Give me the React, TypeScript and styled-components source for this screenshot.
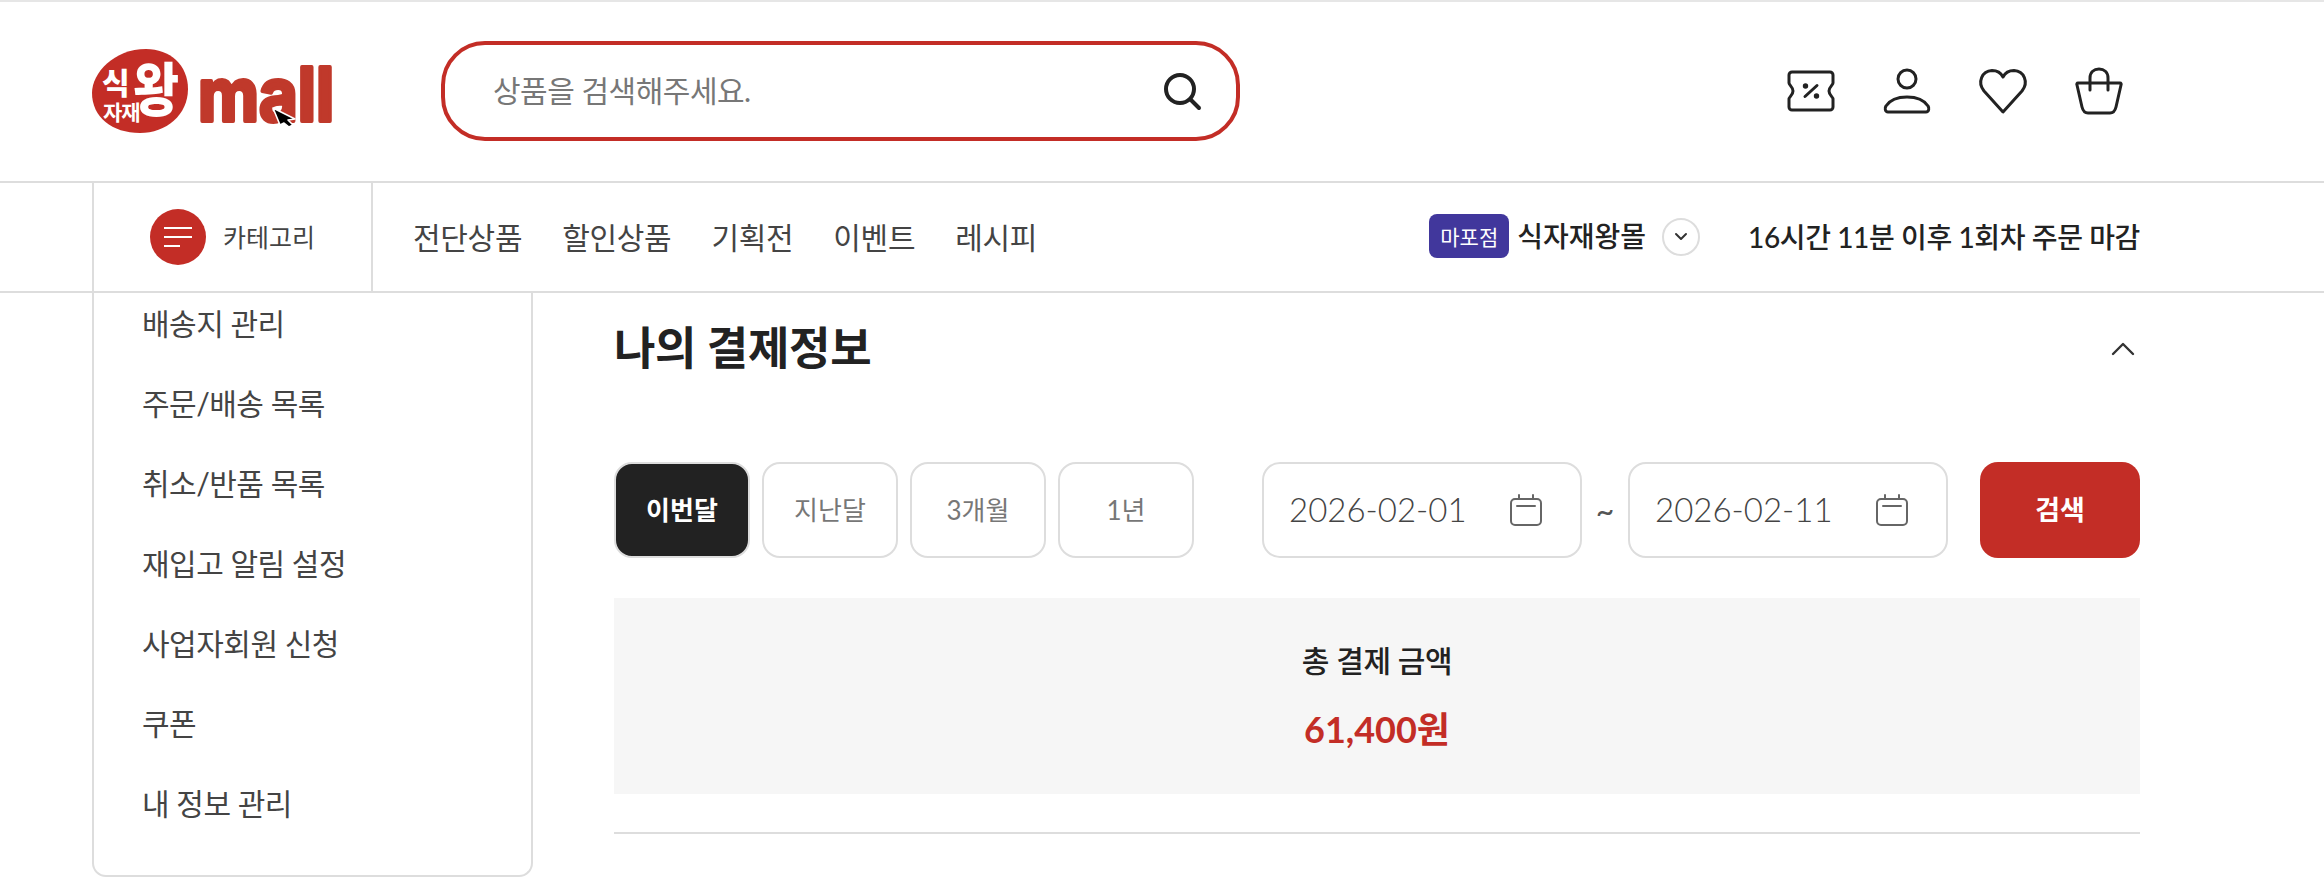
import styled, { createGlobalStyle } from "styled-components";

const RED = "#c32d26";
const LINE = "#dddddd";
const FONT = `Lato, "Noto Sans CJK KR", sans-serif`;

const GlobalStyle = createGlobalStyle`
  html, body {
    margin: 0;
    padding: 0;
    background: #fff;
    overflow: hidden;
  }
  * {
    box-sizing: border-box;
  }
  body {
    font-family: ${FONT};
    color: #222;
  }
  svg {
    overflow: visible;
  }
`;

const Page = styled.div`
  width: 2324px;
  height: 894px;
  overflow: hidden;
  border-top: 2px solid #e6e6e6;
`;

const Header = styled.header`
  height: 179px;
  display: flex;
  align-items: center;
  padding: 0 201px 0 92px;
`;

const LogoBox = styled.a`
  display: block;
  width: 349px;
  height: 108px;
  margin-top: -2px;
`;

const SearchBox = styled.div`
  width: 799px;
  height: 100px;
  border: 4px solid ${RED};
  border-radius: 44px;
  display: flex;
  align-items: center;
  justify-content: space-between;
  padding: 0 35px 0 48px;
  margin-top: -2px;
`;

const Placeholder = styled.span`
  font-size: 30px;
  letter-spacing: -0.5px;
  color: #777;
  margin-top: -3px;
`;

const IconRow = styled.div`
  margin-left: auto;
  display: flex;
  gap: 48px;
  margin-top: -2px;
`;

const NavBar = styled.nav`
  height: 112px;
  border-top: 2px solid ${LINE};
  border-bottom: 2px solid ${LINE};
  display: flex;
  align-items: stretch;
  padding: 0 184px 0 92px;
`;

const CategoryBox = styled.div`
  width: 281px;
  border-left: 2px solid ${LINE};
  border-right: 2px solid ${LINE};
  display: flex;
  align-items: center;
  padding-left: 56px;
  gap: 17px;
`;

const CategoryCircle = styled.span`
  width: 56px;
  height: 56px;
  border-radius: 50%;
  background: ${RED};
  display: flex;
  flex-direction: column;
  justify-content: center;
  gap: 7px;
  padding-left: 14px;
`;

const CategoryLine = styled.span<{ $short?: boolean }>`
  display: block;
  height: 2px;
  width: ${(p) => (p.$short ? 16 : 28)}px;
  background: #fff;
`;

const CategoryLabel = styled.span`
  font-size: 25px;
  color: #444;
  padding-bottom: 2px;
`;

const NavLinks = styled.div`
  display: flex;
  align-items: center;
  gap: 40px;
  padding: 0 0 2px 40px;
`;

const NavLink = styled.a`
  font-size: 30px;
  letter-spacing: -0.3px;
  color: #444;
`;

const NavRight = styled.div`
  margin-left: auto;
  display: flex;
  align-items: center;
`;

const Badge = styled.span`
  width: 80px;
  height: 44px;
  border-radius: 8px;
  background: #41379c;
  color: #fff;
  font-size: 21px;
  display: flex;
  align-items: center;
  justify-content: center;
  margin-bottom: 2px;
`;

const StoreName = styled.span`
  margin-left: 8px;
  font-size: 28px;
  font-weight: 500;
  color: #222;
  padding-bottom: 4px;
`;

const StoreToggle = styled.span`
  width: 38px;
  height: 38px;
  margin-left: 16px;
  border: 2px solid ${LINE};
  border-radius: 50%;
  display: flex;
  align-items: center;
  justify-content: center;
`;

const Deadline = styled.span`
  margin-left: 48px;
  font-size: 28px;
  font-weight: 500;
  letter-spacing: -0.38px;
  color: #222;
  padding-bottom: 2px;
`;

const Body = styled.div`
  display: flex;
  align-items: flex-start;
  padding: 0 184px 0 92px;
`;

const Sidebar = styled.ul`
  width: 441px;
  height: 584px;
  margin: 0 81px 0 0;
  padding: 0 0 0 48px;
  list-style: none;
  border: 2px solid ${LINE};
  border-top: none;
  border-radius: 0 0 14px 14px;
  flex-shrink: 0;
`;

const SideItem = styled.li`
  height: 80px;
  display: flex;
  align-items: center;
  font-size: 30px;
  letter-spacing: -0.5px;
  color: #444;
  &:first-child {
    margin-top: -11px;
  }
`;

const Main = styled.main`
  flex: 1;
`;

const TitleRow = styled.div`
  height: 112px;
  display: flex;
  align-items: center;
  justify-content: space-between;
  padding-right: 5px;
`;

const Title = styled.h2`
  margin: 0;
  padding-bottom: 8px;
  font-size: 45px;
  font-weight: 700;
  letter-spacing: -0.3px;
  color: #222;
`;

const FilterRow = styled.div`
  margin-top: 57px;
  display: flex;
  align-items: center;
`;

const PeriodGroup = styled.div`
  display: flex;
  gap: 12px;
  margin-right: 68px;
`;

const Period = styled.button<{ $active?: boolean }>`
  width: 136px;
  height: 96px;
  border: 2px solid ${LINE};
  border-radius: 18px;
  background: ${(p) => (p.$active ? "#222" : "#fff")};
  color: ${(p) => (p.$active ? "#fff" : "#777")};
  font-family: ${FONT};
  font-size: 26px;
  font-weight: ${(p) => (p.$active ? 700 : 400)};
  padding: 0 0 3px;
`;

const DateField = styled.div`
  width: 320px;
  height: 96px;
  border: 2px solid ${LINE};
  border-radius: 18px;
  display: flex;
  align-items: center;
  justify-content: space-between;
  padding: 0 38px 0 25px;
  font-size: 33px;
  font-weight: 300;
  color: #444;
`;

const DateText = styled.span`
  padding-bottom: 2px;
`;

const Tilde = styled.span`
  width: 46px;
  text-align: center;
  font-size: 32px;
  color: #555;
`;

const SearchButton = styled.button`
  width: 160px;
  height: 96px;
  margin-left: auto;
  border: none;
  border-radius: 18px;
  background: ${RED};
  color: #fff;
  font-family: ${FONT};
  font-size: 27px;
  font-weight: 700;
  padding: 0 0 3px;
`;

const Summary = styled.section`
  margin-top: 40px;
  height: 196px;
  background: #f6f6f6;
  display: flex;
  flex-direction: column;
  align-items: center;
  justify-content: center;
  gap: 26px;
`;

const SummaryLabel = styled.span`
  font-size: 30px;
  font-weight: 500;
  letter-spacing: -0.4px;
  color: #222;
  line-height: 40px;
`;

const SummaryValue = styled.span`
  font-size: 36px;
  font-weight: 700;
  color: ${RED};
  line-height: 46px;
`;

const Divider = styled.hr`
  margin: 38px 0 0;
  border: none;
  border-top: 2px solid ${LINE};
`;

const LogoMark = () => (
  <svg width="242" height="108" viewBox="0 -12 242 108">
    <path
      d="M0 44C0 24 22 0 54 0C78 0 96 16 96 40C96 66 74 84 48 84C20 84 0 68 0 44Z"
      fill="#c32d26"
    />
    <g fill="#fff" fontFamily='"Noto Sans CJK KR", sans-serif'>
      <text x="10" y="45" fontSize="30" fontWeight="900">식</text>
      <text x="11" y="71" fontSize="21" fontWeight="700" letterSpacing="-1">자재</text>
      <text x="0" y="0" fontSize="50" fontWeight="900" transform="translate(41 62) scale(1 1.16)">왕</text>
    </g>
    <text
      x="106"
      y="72"
      fill="#c0392b"
      stroke="#c0392b"
      strokeWidth="4"
      strokeLinejoin="round"
      fontFamily="Inter, sans-serif"
      fontWeight="700"
      fontSize="74"
      textLength="136"
      lengthAdjust="spacingAndGlyphs"
    >
      mall
    </text>
    <path d="M181 59L203 70L196 71L201 76L197 78L192 74L188 76Z" fill="#000" stroke="#fff" strokeWidth="1.6" strokeLinejoin="round" />
  </svg>
);

const SearchIcon = () => (
  <svg width="38" height="38" viewBox="0 0 38 38" fill="none" stroke="#222" strokeWidth="4" strokeLinecap="round">
    <circle cx="17" cy="17" r="14" />
    <path d="M27.5 27.5L36 36" />
  </svg>
);

const CouponIcon = () => (
  <svg width="48" height="48" viewBox="0 0 48 48" fill="none" stroke="#222" strokeWidth="3" strokeLinecap="round" strokeLinejoin="round">
    <path d="M5 5H43A3 3 0 0 1 46 8V16C46 18 42 20 42 24C42 28 46 30 46 32V40A3 3 0 0 1 43 43H5A3 3 0 0 1 2 40V32C2 30 6 28 6 24C6 20 2 18 2 16V8A3 3 0 0 1 5 5Z" />
    <path d="M18 29.5L30 18.5" />
    <circle cx="18.5" cy="19" r="1.2" fill="#222" />
    <circle cx="29.5" cy="29" r="1.2" fill="#222" />
  </svg>
);

const UserIcon = () => (
  <svg width="48" height="48" viewBox="0 0 48 48" fill="none" stroke="#222" strokeWidth="3" strokeLinejoin="round">
    <circle cx="24" cy="12" r="9" />
    <path d="M5 45C2 45 1.5 41 3 39C7 33 15 30 24 30C33 30 41 33 45 39C46.5 41 46 45 43 45Z" />
  </svg>
);

const HeartIcon = () => (
  <svg width="48" height="48" viewBox="0 0 48 48" fill="none" stroke="#222" strokeWidth="3" strokeLinejoin="round">
    <path d="M24 45L5 24C-2 15 3 4 13 3.5C18 3.5 22 6 24 10C26 6 30 3.5 35 3.5C45 4 50 15 43 24Z" />
  </svg>
);

const BagIcon = () => (
  <svg width="48" height="48" viewBox="0 0 48 48" fill="none" stroke="#222" strokeWidth="3" strokeLinecap="round" strokeLinejoin="round">
    <path d="M3 16H45C46 16 46.5 17 46 18L41 40C40 44 38 46 35 46H13C10 46 8 44 7 40L2 18C1.5 17 2 16 3 16Z" />
    <path d="M15 23V11C15 5 19 2 24 2C29 2 33 5 33 11V23" />
  </svg>
);

const CalendarIcon = () => (
  <svg width="32" height="32" viewBox="0 0 32 32" fill="none" stroke="#666" strokeWidth="2" strokeLinecap="round" strokeLinejoin="round">
    <rect x="1" y="5" width="30" height="26" rx="4" />
    <path d="M9 1V5M23 1V5M7 12H25" />
  </svg>
);

const ChevronDown = () => (
  <svg width="14" height="10" viewBox="0 0 14 10" fill="none" stroke="#333" strokeWidth="2" strokeLinecap="round" strokeLinejoin="round">
    <path d="M2 2L7 7L12 2" />
  </svg>
);

const ChevronUp = () => (
  <svg width="24" height="14" viewBox="0 0 24 14" fill="none" stroke="#333" strokeWidth="2.4" strokeLinecap="round" strokeLinejoin="round">
    <path d="M2 12L12 2L22 12" />
  </svg>
);

const navItems = ["전단상품", "할인상품", "기획전", "이벤트", "레시피"];
const sideItems = ["배송지 관리", "주문/배송 목록", "취소/반품 목록", "재입고 알림 설정", "사업자회원 신청", "쿠폰", "내 정보 관리"];
const periods = ["이번달", "지난달", "3개월", "1년"];

const App = function () {
  return (
    <Page>
      <GlobalStyle />
      <Header>
        <LogoBox>
          <LogoMark />
        </LogoBox>
        <SearchBox>
          <Placeholder>상품을 검색해주세요.</Placeholder>
          <SearchIcon />
        </SearchBox>
        <IconRow>
          <CouponIcon />
          <UserIcon />
          <HeartIcon />
          <BagIcon />
        </IconRow>
      </Header>
      <NavBar>
        <CategoryBox>
          <CategoryCircle>
            <CategoryLine />
            <CategoryLine />
            <CategoryLine $short />
          </CategoryCircle>
          <CategoryLabel>카테고리</CategoryLabel>
        </CategoryBox>
        <NavLinks>
          {navItems.map((item) => (
            <NavLink key={item}>{item}</NavLink>
          ))}
        </NavLinks>
        <NavRight>
          <Badge>마포점</Badge>
          <StoreName>식자재왕몰</StoreName>
          <StoreToggle>
            <ChevronDown />
          </StoreToggle>
          <Deadline>16시간 11분 이후 1회차 주문 마감</Deadline>
        </NavRight>
      </NavBar>
      <Body>
        <Sidebar>
          {sideItems.map((item) => (
            <SideItem key={item}>{item}</SideItem>
          ))}
        </Sidebar>
        <Main>
          <TitleRow>
            <Title>나의 결제정보</Title>
            <ChevronUp />
          </TitleRow>
          <FilterRow>
            <PeriodGroup>
              {periods.map((period, i) => (
                <Period key={period} $active={i === 0}>
                  {period}
                </Period>
              ))}
            </PeriodGroup>
            <DateField>
              <DateText>2026-02-01</DateText>
              <CalendarIcon />
            </DateField>
            <Tilde>~</Tilde>
            <DateField>
              <DateText>2026-02-11</DateText>
              <CalendarIcon />
            </DateField>
            <SearchButton>검색</SearchButton>
          </FilterRow>
          <Summary>
            <SummaryLabel>총 결제 금액</SummaryLabel>
            <SummaryValue>61,400원</SummaryValue>
          </Summary>
          <Divider />
        </Main>
      </Body>
    </Page>
  );
};

export default App;
